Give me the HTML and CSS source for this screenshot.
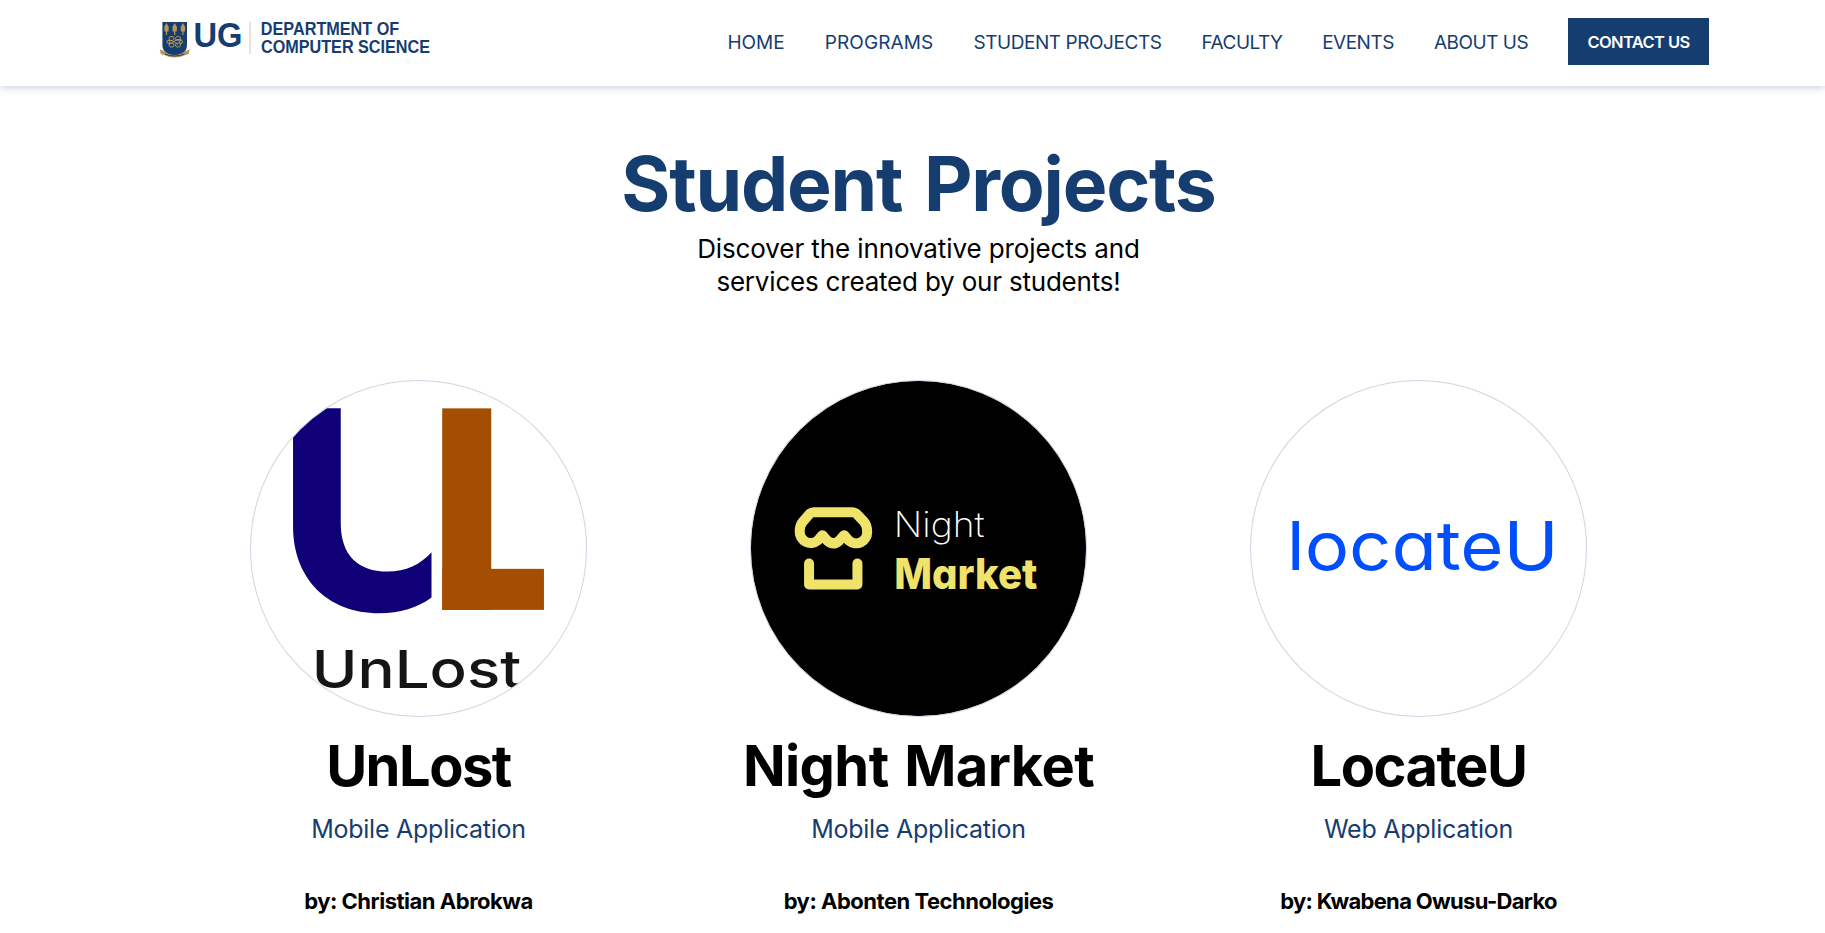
FILE: index.html
```html
<!DOCTYPE html>
<html lang="en">
<head>
<meta charset="utf-8">
<title>Student Projects</title>
<link rel="stylesheet" href="styles.css">
</head>
<body>
<header class="header">
  <svg class="brand" viewBox="0 0 280 50" role="img" aria-label="UG Department of Computer Science">
    <path class="shield" d="M3.400 4H28V27Q28 36 15.700 38Q3.400 36 3.400 27Z"/>
    <g class="gold">
      <path d="M7.500 5L9.800 9L9.500 13.500H5.500L5.200 9ZM15.700 5L18 9L17.700 13.500H13.700L13.400 9ZM23.900 5L26.200 9L25.900 13.500H21.900L21.600 9Z"/>
      <path d="M6.900 13h1.200v4h-1.200zM15.100 13h1.200v4h-1.200zM23.300 13h1.200v4h-1.200z"/>
      <path d="M.800 31.500L5 33Q15.700 41 26.500 33L30.700 31.500L29.800 36L26.500 37Q15.700 42 5 37L1.700 36Z"/>
    </g>
    <path class="ribbon-ink" d="M6 36Q15.700 40 25.500 36"/>
    <g class="knot">
      <rect x="10" y="18.500" width="5" height="4" rx="2"/><rect x="16.500" y="18.500" width="5" height="4" rx="2"/>
      <rect x="10" y="25" width="5" height="4" rx="2"/><rect x="16.500" y="25" width="5" height="4" rx="2"/>
      <path d="M9 22.500h4l6 4M9 25.500h3l6-4h4.500"/>
      <circle cx="9.300" cy="23.900" r="1.500"/><circle cx="22" cy="23.900" r="1.500"/>
    </g>
    <text class="ug" x="34.500" y="29.300" textLength="49" lengthAdjust="spacingAndGlyphs">UG</text>
    <path class="rule" d="M91 3.500V36"/>
    <text class="dept" x="101.800" y="17" textLength="138.500" lengthAdjust="spacingAndGlyphs">DEPARTMENT OF</text>
    <text class="dept" x="102" y="34.600" textLength="169" lengthAdjust="spacingAndGlyphs">COMPUTER SCIENCE</text>
  </svg>
  <nav class="nav">
    <a class="link home">HOME</a>
    <a class="link programs">PROGRAMS</a>
    <a class="link projects-link">STUDENT PROJECTS</a>
    <a class="link faculty">FACULTY</a>
    <a class="link events">EVENTS</a>
    <a class="link about">ABOUT US</a>
    <a class="contact">CONTACT US</a>
  </nav>
</header>
<main class="main">
  <h1 class="title">Student Projects</h1>
  <p class="lead">Discover the innovative projects and<br><span class="second">services created by our students!</span></p>
  <section class="projects">
    <article class="card">
      <svg class="logo" viewBox="31 31 1010 1010">
        <defs>
          <clipPath id="disc"><circle cx="536" cy="536" r="503"/></clipPath>
        </defs>
        <g clip-path="url(#disc)">
          <path class="hook" d="M160 116H303V460C303 556 355 605 443 605C498 605 543 583 575 547V683C533 714 480 730 418 730C264 730 160 626 160 470Z"/>
          <g class="corner"><rect x="607" y="116" width="147" height="604"/><rect x="607" y="597" width="305" height="123"/></g>
          <text class="unlost" x="216" y="955" textLength="628" lengthAdjust="spacingAndGlyphs">UnLost</text>
        </g>
        <circle class="ring" cx="536" cy="536" r="503.500"/>
      </svg>
      <h2 class="name n1">UnLost</h2>
      <p class="kind">Mobile Application</p>
      <p class="author">by: Christian Abrokwa</p>
    </article>
    <article class="card">
      <svg class="logo" viewBox="31 31 1010 1010">
        <circle cx="536" cy="536" r="503"/>
        <circle class="ring" cx="536" cy="536" r="503.500"/>
        <g class="stall">
          <path d="M222 427H338Q345 427 350 432L373 456Q382 466 382 485A33 33 0 0 1 327 512L313 496L299 512Q281 529 262 512L248 496L234 512A33 33 0 0 1 180 485Q180 466 189 456L210 432Q215 427 222 427Z"/>
          <path d="M208 581V644H353V581"/>
        </g>
        <text class="night" x="462" y="501" textLength="272" lengthAdjust="spacingAndGlyphs">Night</text>
        <text class="market" x="463" y="658" textLength="429" lengthAdjust="spacingAndGlyphs">Market</text>
      </svg>
      <h2 class="name n2">Night Market</h2>
      <p class="kind">Mobile Application</p>
      <p class="author">by: Abonten Technologies</p>
    </article>
    <article class="card">
      <svg class="logo" viewBox="31 31 1010 1010">
        <circle class="ring" cx="536" cy="536" r="503.500"/>
        <text class="locate" x="141" y="600" textLength="815" lengthAdjust="spacingAndGlyphs">locateU</text>
      </svg>
      <h2 class="name n3">LocateU</h2>
      <p class="kind">Web Application</p>
      <p class="author a3">by: Kwabena Owusu-Darko</p>
    </article>
  </section>
</main>
</body>
</html>
```
FILE: styles.css
```css
* { box-sizing: border-box; }
body {
  margin: 0;
  height: 933px;
  overflow: hidden;
  background: #fff;
  color: #000;
  font-family: Inter, "Liberation Sans", sans-serif;
}
h1, h2, p { margin: 0; white-space: nowrap; }
.header {
  height: 86px;
  padding: 18px 116px 0 159px;
  display: flex;
  justify-content: space-between;
  align-items: flex-start;
  background: #fff;
  box-shadow: 0 1px 8px rgba(22, 61, 111, .28);
}
.brand { width: 280px; height: 50px; overflow: visible; }
.shield { fill: #163d6f; }
.gold { fill: #b5975a; }
.ribbon-ink { fill: none; stroke: #163d6f; stroke-width: 1; }
.knot { fill: none; stroke: #b5975a; stroke-width: 1; }
.ug { font: bold 35.500px "Liberation Sans", sans-serif; fill: #163d6f; }
.dept { font: bold 17.500px "Liberation Sans", sans-serif; fill: #163d6f; }
.rule { stroke: #e5d9c3; stroke-width: 1.5; }
.nav {
  display: flex;
  align-items: center;
  gap: 40px;
  height: 47px;
  color: #163d6f;
  font-size: 19px;
}
.link {
  display: flex;
  justify-content: center;
  padding-top: 2px;
  white-space: nowrap;
  letter-spacing: -.5px;
}
.home { width: 58px; letter-spacing: 0; }
.programs { width: 108px; letter-spacing: .1px; }
.projects-link { width: 189px; letter-spacing: -.45px; }
.faculty { width: 80px; }
.events { width: 72px; }
.about { width: 94px; }
.contact {
  width: 141px;
  height: 47px;
  line-height: 49px;
  text-align: center;
  background: #163d6f;
  color: #fff;
  font-size: 16.5px;
  font-weight: 600;
  letter-spacing: -.6px;
}
.main { padding-left: 12px; text-align: center; }
.title {
  padding-top: 53px;
  font-size: 75px;
  line-height: 90px;
  font-weight: 700;
  letter-spacing: -1.2px;
  word-spacing: 5px;
  color: #163d6f;
}
.lead { padding-top: 3px; font-size: 26px; line-height: 33px; letter-spacing: -.1px; }
.second { letter-spacing: -.2px; }
.projects {
  display: grid;
  grid-template-columns: repeat(3, 500px);
  justify-content: center;
  padding-top: 82px;
}
.card { display: flex; flex-direction: column; align-items: center; }
.logo { width: 337px; height: 337px; }
.ring { fill: none; stroke: #cdd6e2; stroke-width: 3; }
.hook { fill: #0f0078; }
.corner { fill: #a34e00; }
.unlost { font-size: 158px; font-weight: 500; fill: #151515; }
.stall path { fill: none; stroke: #f0e36b; stroke-width: 30; stroke-linejoin: round; stroke-linecap: round; }
.night { font-size: 104px; font-weight: 200; fill: #fff; font-feature-settings: "cv11"; }
.market { font-size: 128px; font-weight: 800; fill: #f0e36b; font-feature-settings: "cv11"; }
.locate { font-size: 202px; font-weight: 400; fill: #004fff; font-feature-settings: "cv11"; }
.name { margin-top: 14px; font-size: 56px; line-height: 70px; font-weight: 700; }
.n1, .n3 { letter-spacing: -1.5px; }
.n2 { letter-spacing: -.6px; word-spacing: 3px; }
.kind { margin-top: 11px; font-size: 25px; line-height: 34px; letter-spacing: -.25px; color: #163d6f; }
.author { margin-top: 40px; font-size: 22px; line-height: 30px; font-weight: 700; letter-spacing: -.48px; }
.a3 { letter-spacing: -.68px; }
```
